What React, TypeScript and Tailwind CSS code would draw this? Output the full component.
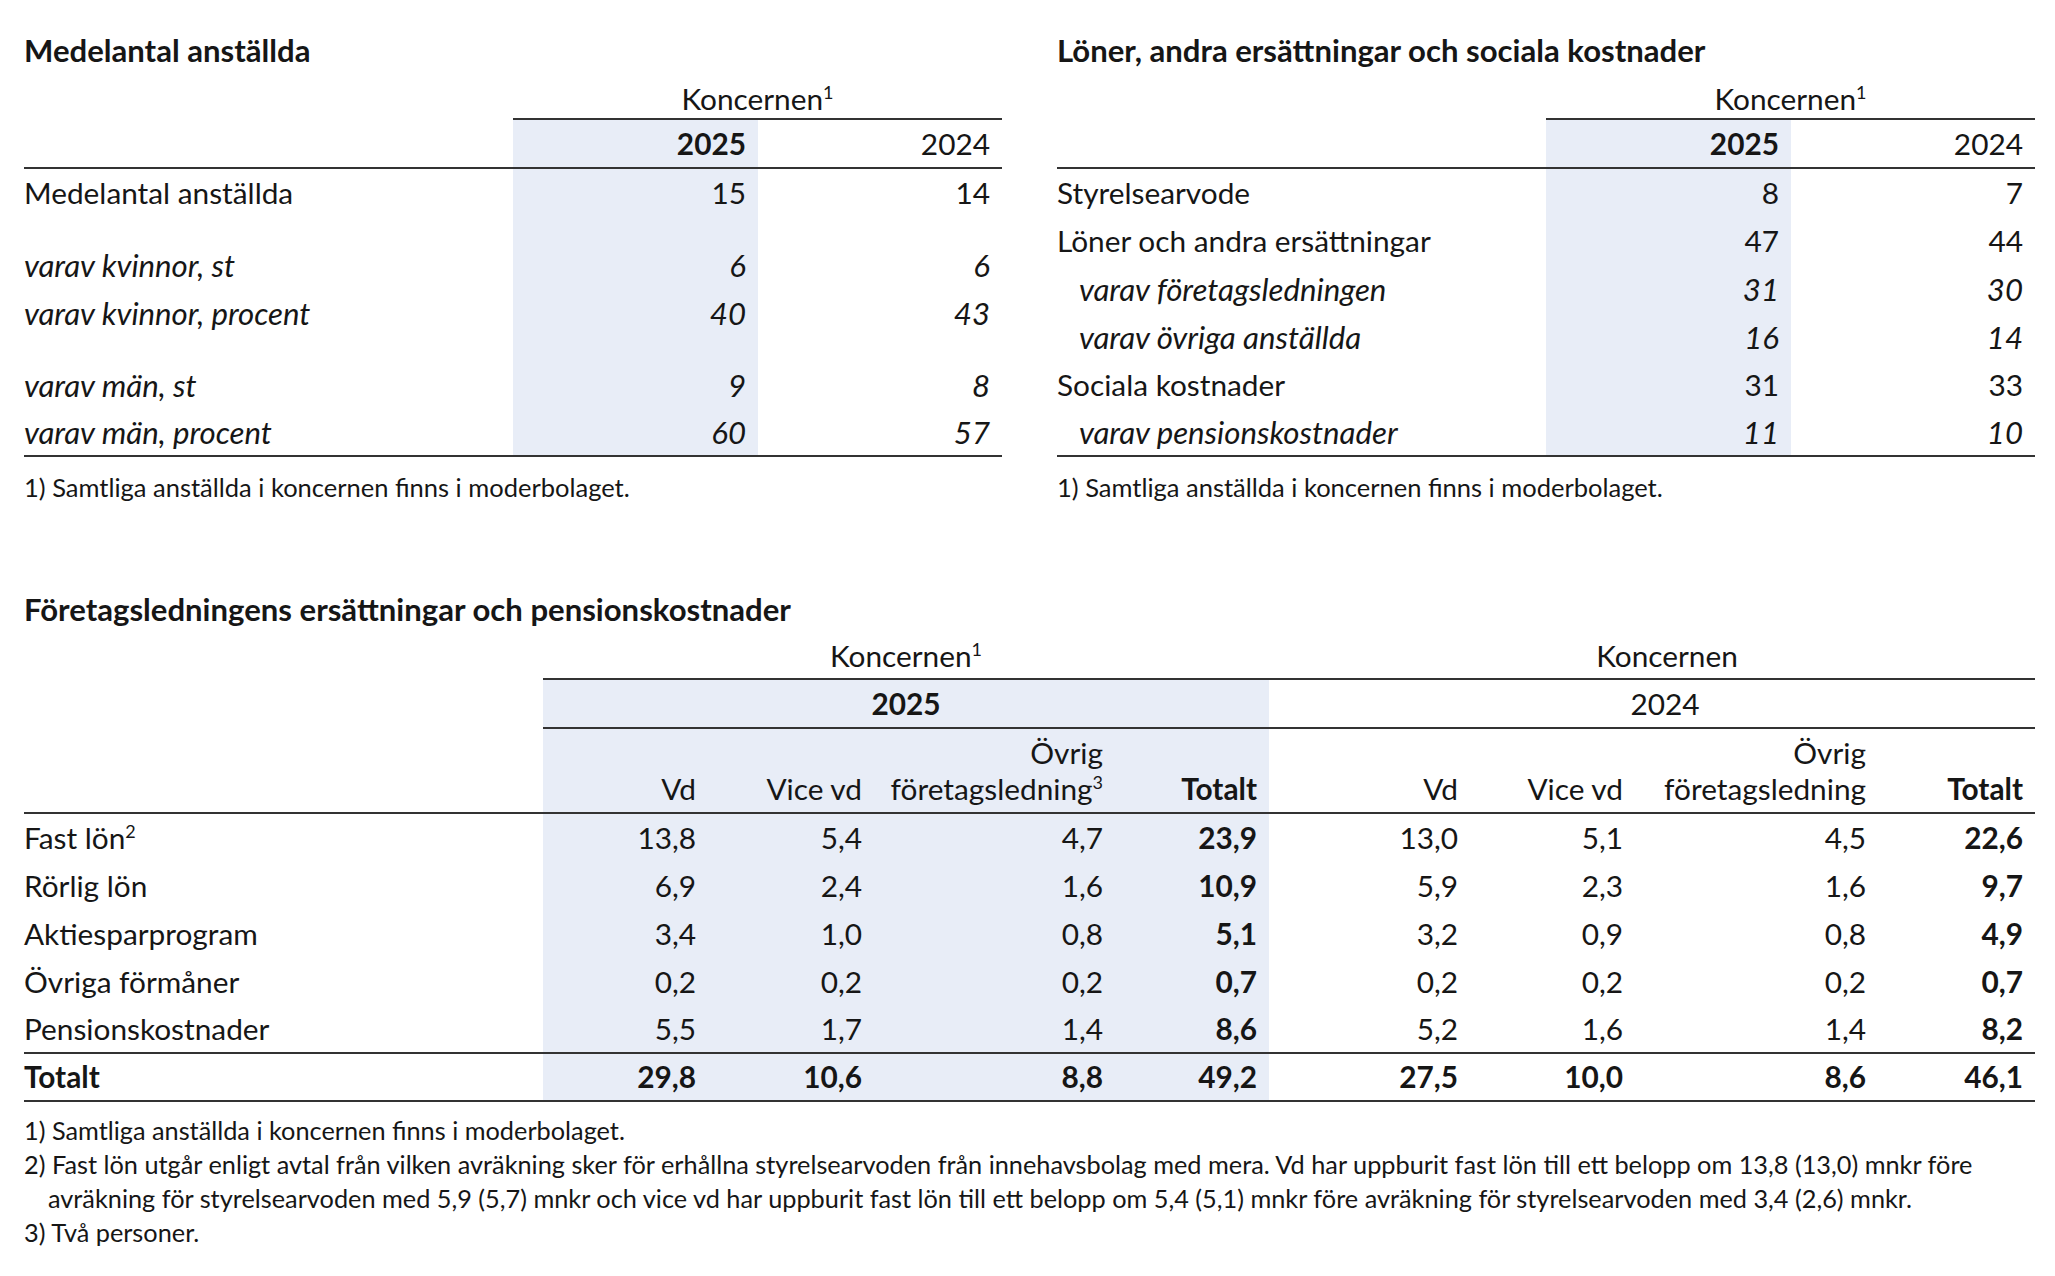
import React from "react";

type DataRow = {
  label: string;
  v1: string;
  v2: string;
  italic?: boolean;
  indent?: boolean;
  spacer?: boolean;
};

const LINE = "border-b-2 border-[#333333]";

function Sup({ n }: { n: string }) {
  return <span className="align-super text-[18px] leading-none">{n}</span>;
}

function SmallTable({ title, rows }: { title: string; rows: DataRow[] }) {
  return (
    <div className="w-[978px]">
      <h2 className="h-[36px] text-[31.1px] leading-[36px] font-bold">{title}</h2>
      <div className="mt-[12px] grid grid-cols-[489px_245px_244px]">
        <div className="h-[40px]" />
        <div className={`col-span-2 flex h-[40px] items-center justify-center ${LINE}`}>
          <span>
            Koncernen
            <Sup n="1" />
          </span>
        </div>
        <div className={`h-[49px] ${LINE}`} />
        <div className={`flex h-[49px] items-center justify-end bg-[#e8edf7] pr-[12px] font-bold ${LINE}`}>2025</div>
        <div className={`flex h-[49px] items-center justify-end pr-[12px] ${LINE}`}>2024</div>
        {rows.map((r, i) => {
          if (r.spacer) {
            return (
              <React.Fragment key={i}>
                <div className="h-[24px]" />
                <div className="h-[24px] bg-[#e8edf7]" />
                <div className="h-[24px]" />
              </React.Fragment>
            );
          }
          const last = i === rows.length - 1;
          const rowCls = last ? `h-[48px] ${LINE}` : "h-[48px]";
          const txt = r.italic ? "italic text-[31.2px]" : "";
          return (
            <React.Fragment key={i}>
              <div className={`flex items-center ${rowCls} ${txt} ${r.indent ? "pl-[22px]" : ""}`}>{r.label}</div>
              <div className={`flex items-center justify-end bg-[#e8edf7] pr-[12px] ${rowCls} ${txt}`}>{r.v1}</div>
              <div className={`flex items-center justify-end pr-[12px] ${rowCls} ${txt}`}>{r.v2}</div>
            </React.Fragment>
          );
        })}
      </div>
      <p className="mt-[13px] text-[25.5px] leading-[34px]">1) Samtliga anställda i koncernen finns i moderbolaget.</p>
    </div>
  );
}

const leftRows: DataRow[] = [
  { label: "Medelantal anställda", v1: "15", v2: "14" },
  { label: "", v1: "", v2: "", spacer: true },
  { label: "varav kvinnor, st", v1: "6", v2: "6", italic: true },
  { label: "varav kvinnor, procent", v1: "40", v2: "43", italic: true },
  { label: "", v1: "", v2: "", spacer: true },
  { label: "varav män, st", v1: "9", v2: "8", italic: true },
  { label: "varav män, procent", v1: "60", v2: "57", italic: true },
];

const rightRows: DataRow[] = [
  { label: "Styrelsearvode", v1: "8", v2: "7" },
  { label: "Löner och andra ersättningar", v1: "47", v2: "44" },
  { label: "varav företagsledningen", v1: "31", v2: "30", italic: true, indent: true },
  { label: "varav övriga anställda", v1: "16", v2: "14", italic: true, indent: true },
  { label: "Sociala kostnader", v1: "31", v2: "33" },
  { label: "varav pensionskostnader", v1: "11", v2: "10", italic: true, indent: true },
];

const bigRows: { label: string; sup?: string; vals: string[]; bold?: boolean }[] = [
  { label: "Fast lön", sup: "2", vals: ["13,8", "5,4", "4,7", "23,9", "13,0", "5,1", "4,5", "22,6"] },
  { label: "Rörlig lön", vals: ["6,9", "2,4", "1,6", "10,9", "5,9", "2,3", "1,6", "9,7"] },
  { label: "Aktiesparprogram", vals: ["3,4", "1,0", "0,8", "5,1", "3,2", "0,9", "0,8", "4,9"] },
  { label: "Övriga förmåner", vals: ["0,2", "0,2", "0,2", "0,7", "0,2", "0,2", "0,2", "0,7"] },
  { label: "Pensionskostnader", vals: ["5,5", "1,7", "1,4", "8,6", "5,2", "1,6", "1,4", "8,2"] },
  { label: "Totalt", vals: ["29,8", "10,6", "8,8", "49,2", "27,5", "10,0", "8,6", "46,1"], bold: true },
];

const HEAD = `flex h-[85px] items-end justify-end pr-[12px] pb-[5px] text-right leading-[36px] ${LINE}`;

function BigTable() {
  return (
    <div className="w-[2011px]">
      <h2 className="h-[36px] text-[31.1px] leading-[36px] font-bold">
        Företagsledningens ersättningar och pensionskostnader
      </h2>
      <div className="mt-[11px] grid grid-cols-[519px_165px_166px_241px_154px_201px_165px_243px_157px]">
        {/* Koncernen row */}
        <div className="h-[42px]" />
        <div className={`col-span-4 flex h-[42px] items-center justify-center pb-[5px] ${LINE}`}>
          <span>
            Koncernen
            <Sup n="1" />
          </span>
        </div>
        <div className={`col-span-4 flex h-[42px] items-center justify-center pb-[5px] pl-[30px] ${LINE}`}>Koncernen</div>
        {/* Year row */}
        <div className="h-[49px]" />
        <div className={`col-span-4 flex h-[49px] items-center justify-center bg-[#e8edf7] font-bold ${LINE}`}>2025</div>
        <div className={`col-span-4 flex h-[49px] items-center justify-center pl-[26px] ${LINE}`}>2024</div>
        {/* Column headers */}
        <div className={`h-[85px] ${LINE}`} />
        <div className={`${HEAD} bg-[#e8edf7]`}>Vd</div>
        <div className={`${HEAD} bg-[#e8edf7]`}>Vice vd</div>
        <div className={`${HEAD} bg-[#e8edf7]`}>
          <span>
            Övrig
            <br />
            företagsledning
            <Sup n="3" />
          </span>
        </div>
        <div className={`${HEAD} bg-[#e8edf7] font-bold`}>Totalt</div>
        <div className={HEAD}>Vd</div>
        <div className={HEAD}>Vice vd</div>
        <div className={HEAD}>
          <span>
            Övrig
            <br />
            företagsledning
          </span>
        </div>
        <div className={`${HEAD} font-bold`}>Totalt</div>
        {/* Data */}
        {bigRows.map((r, i) => {
          const withLine = i >= bigRows.length - 2;
          const rowCls = withLine ? `h-[48px] ${LINE}` : "h-[48px]";
          return (
            <React.Fragment key={i}>
              <div className={`flex items-center ${rowCls} ${r.bold ? "font-bold" : ""}`}>
                <span>
                  {r.label}
                  {r.sup ? <Sup n={r.sup} /> : null}
                </span>
              </div>
              {r.vals.map((v, j) => {
                const blue = j < 4;
                const bold = r.bold || j === 3 || j === 7;
                return (
                  <div
                    key={j}
                    className={`flex items-center justify-end pr-[12px] ${rowCls} ${blue ? "bg-[#e8edf7]" : ""} ${bold ? "font-bold" : ""}`}
                  >
                    {v}
                  </div>
                );
              })}
            </React.Fragment>
          );
        })}
      </div>
      <div className="mt-[11px] text-[25.3px] leading-[34px]">
        <p>1) Samtliga anställda i koncernen finns i moderbolaget.</p>
        <p className="pl-[24px] -indent-[24px]">
          2) Fast lön utgår enligt avtal från vilken avräkning sker för erhållna styrelsearvoden från innehavsbolag med mera. Vd har uppburit fast lön till ett belopp om 13,8 (13,0) mnkr före
          <br />
          avräkning för styrelsearvoden med 5,9 (5,7) mnkr och vice vd har uppburit fast lön till ett belopp om 5,4 (5,1) mnkr före avräkning för styrelsearvoden med 3,4 (2,6) mnkr.
        </p>
        <p>3) Två personer.</p>
      </div>
    </div>
  );
}

export default function App() {
  return (
    <div className="min-h-screen bg-white pt-[32px] pl-[24px] font-['Lato',sans-serif] text-[29.8px] leading-[36px] text-[#161616]">
      <div className="flex gap-[55px]">
        <SmallTable title="Medelantal anställda" rows={leftRows} />
        <SmallTable title="Löner, andra ersättningar och sociala kostnader" rows={rightRows} />
      </div>
      <div className="mt-[87px]">
        <BigTable />
      </div>
    </div>
  );
}
